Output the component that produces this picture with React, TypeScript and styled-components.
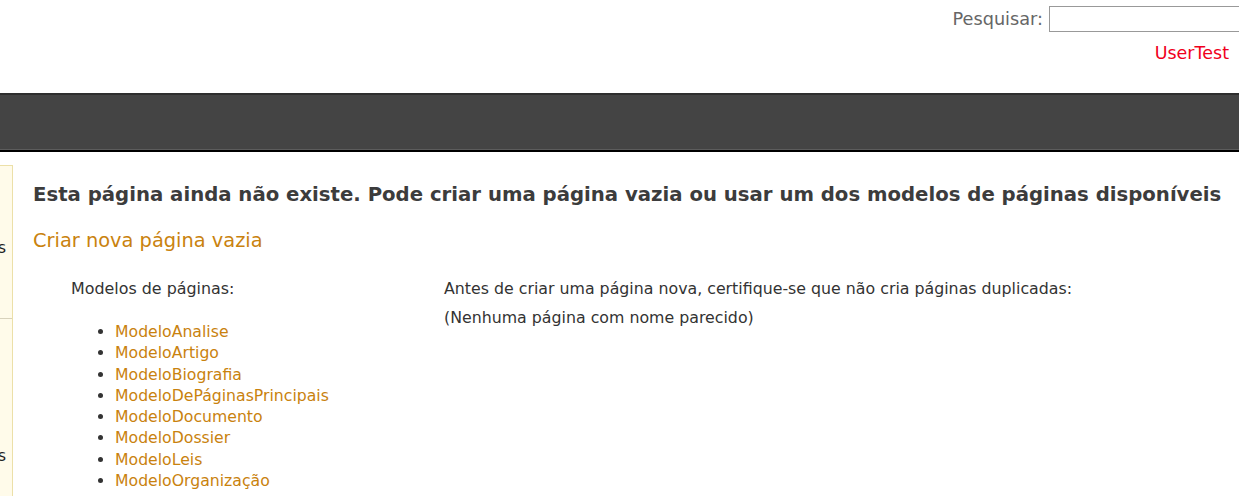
import styled, { createGlobalStyle } from "styled-components";

const GlobalStyle = createGlobalStyle`
  html, body {
    margin: 0;
    padding: 0;
    overflow: hidden;
    background: #fff;
    font-family: "DejaVu Sans", Verdana, sans-serif;
  }
`;

const Header = styled.div`
  height: 93px;
  display: flex;
  flex-direction: column;
  align-items: flex-end;
  overflow: hidden;
`;

const SearchRow = styled.div`
  display: flex;
  align-items: center;
  margin-top: 6px;
  margin-right: -20px;
  gap: 6px;
`;

const SearchLabel = styled.label`
  font-size: 17.7px;
  color: #666;
`;

const SearchInput = styled.input`
  width: 210px;
  height: 26px;
  box-sizing: border-box;
  border: 1px solid #999;
  padding: 0 4px;
  flex-shrink: 0;
`;

const UserLink = styled.a`
  margin-top: 11px;
  margin-right: 10px;
  font-size: 17.5px;
  color: #f0001c;
  text-decoration: none;
`;

const NavBar = styled.div`
  height: 54px;
  background: #444;
  border-top: 2px solid #2e2e2e;
  border-bottom: 1px solid #5c5c5c;
  box-shadow: 0 2px 0 #000;
`;

const Body = styled.div`
  display: flex;
  margin-top: 2px;
`;

const Sidebar = styled.div`
  width: 12px;
  margin-top: 13px;
  background: #fffbea;
  border: 1px solid #ece0a8;
  border-left: none;
  overflow: hidden;
  flex-shrink: 0;
  height: 400px;
`;

const SideBlock = styled.div<{ $h: number; $pad: number; $line?: boolean }>`
  height: ${(p) => p.$h}px;
  box-sizing: border-box;
  padding: ${(p) => p.$pad}px 6px 0 0;
  display: flex;
  justify-content: flex-end;
  align-items: flex-start;
  white-space: nowrap;
  font-size: 16px;
  line-height: 19px;
  color: #222;
  border-bottom: ${(p) => (p.$line ? "1px solid #d8d2bc" : "none")};
`;

const Main = styled.div`
  flex: 1;
  padding: 20px 0 0 20px;
  color: #3c3c3c;
`;

const Title = styled.h2`
  margin: 11px 0 0;
  font-size: 19.7px;
  font-weight: bold;
  color: #3c3c3c;
  white-space: nowrap;
`;

const CreateLink = styled.a`
  display: block;
  margin-top: 23px;
  font-size: 19.4px;
  color: #c9820e;
  text-decoration: none;
`;

const Columns = styled.div`
  display: flex;
  margin-top: 27px;
`;

const TemplatesCol = styled.div`
  width: 411px;
  padding-left: 38px;
  box-sizing: border-box;
`;

const ColHeading = styled.div`
  font-size: 15.9px;
  color: #333;
`;

const TemplateList = styled.ul`
  margin: 23px 0 0;
  padding-left: 44px;
  font-size: 15.7px;
  line-height: 21.3px;
  color: #333;
`;

const TemplateLink = styled.a`
  color: #c9820e;
  text-decoration: none;
`;

const NoticeCol = styled.div`
  font-size: 15.8px;
  color: #333;
  line-height: 29px;
  margin-top: -5px;
`;

const templates = [
  "ModeloAnalise",
  "ModeloArtigo",
  "ModeloBiografia",
  "ModeloDePáginasPrincipais",
  "ModeloDocumento",
  "ModeloDossier",
  "ModeloLeis",
  "ModeloOrganização",
];

export default function App() {
  return (
    <>
      <GlobalStyle />
      <Header>
        <SearchRow>
          <SearchLabel>Pesquisar:</SearchLabel>
          <SearchInput type="text" />
        </SearchRow>
        <UserLink href="#">UserTest</UserLink>
      </Header>
      <NavBar />
      <Body>
        <Sidebar>
          <SideBlock $h={153} $pad={72} $line>Páginas</SideBlock>
          <SideBlock $h={240} $pad={127}>Ferramentas</SideBlock>
        </Sidebar>
        <Main>
          <Title>
            Esta página ainda não existe. Pode criar uma página vazia ou usar um dos modelos de páginas disponíveis
          </Title>
          <CreateLink href="#">Criar nova página vazia</CreateLink>
          <Columns>
            <TemplatesCol>
              <ColHeading>Modelos de páginas:</ColHeading>
              <TemplateList>
                {templates.map((t) => (
                  <li key={t}>
                    <TemplateLink href="#">{t}</TemplateLink>
                  </li>
                ))}
              </TemplateList>
            </TemplatesCol>
            <NoticeCol>
              <div>Antes de criar uma página nova, certifique-se que não cria páginas duplicadas:</div>
              <div>(Nenhuma página com nome parecido)</div>
            </NoticeCol>
          </Columns>
        </Main>
      </Body>
    </>
  );
}
